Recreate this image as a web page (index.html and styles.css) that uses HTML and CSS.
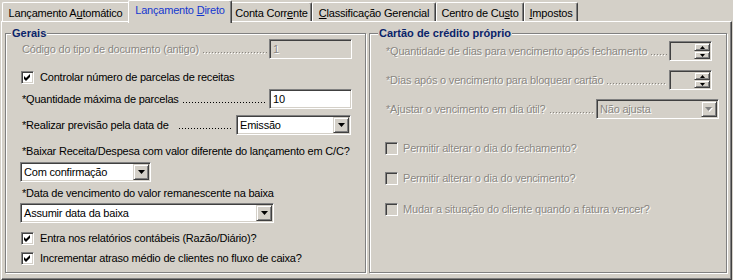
FILE: index.html
```html
<!DOCTYPE html>
<html lang="pt">
<head>
<meta charset="utf-8">
<title>Lançamento Direto</title>
<link rel="stylesheet" href="styles.css">
</head>
<body>
<div class="window">
  <div class="tabs">
    <div class="tab t1 before-active"><span>Lançamento A<u>u</u>tomático</span></div>
    <div class="tab t2 active"><span>Lançamento <u>D</u>ireto</span></div>
    <div class="tab t3 after-active"><span>Conta Corr<u>e</u>nte</span></div>
    <div class="tab t4"><span><u>C</u>lassificação Gerencial</span></div>
    <div class="tab t5"><span>Centro de Cu<u>s</u>to</span></div>
    <div class="tab t6"><span><u>I</u>mpostos</span></div>
  </div>
  <div class="panel">
    <div class="group group-left">
      <div class="group-title">Gerais</div>
      <div class="group-body body-left">
        <div class="row row-code">
          <span class="lbl disabled">Código do tipo de documento (antigo)</span>
          <span class="leader leader-disabled"></span>
          <span class="edit edit-disabled w-edit"><span class="edit-text">1</span></span>
        </div>
        <div class="check-row m-chk1">
          <span class="chk"><svg width="9" height="9" viewBox="0 0 9 9"><polygon points="1,3 3,5 7,1 7,4 3,8 1,6" fill="#000"/></svg></span>
          <span class="chk-lbl">Controlar número de parcelas de receitas</span>
        </div>
        <div class="row row-code m-qtd">
          <span class="lbl">*Quantidade máxima de parcelas</span>
          <span class="leader"></span>
          <span class="edit w-edit"><span class="edit-text">10</span></span>
        </div>
        <div class="row row-prev m-prev">
          <span class="lbl">*Realizar previsão pela data de</span>
          <span class="leader leader-wide"></span>
          <span class="combo w-emissao">
            <span class="combo-text">Emissão</span>
            <span class="combo-btn"><svg width="7" height="4" viewBox="0 0 7 4"><polygon points="0,0 7,0 3.5,4" fill="#000"/></svg></span>
          </span>
        </div>
        <div class="text-row m-baixar">*Baixar Receita/Despesa com valor diferente do lançamento em C/C?</div>
        <span class="combo w-conf m-conf">
          <span class="combo-text">Com confirmação</span>
          <span class="combo-btn"><svg width="7" height="4" viewBox="0 0 7 4"><polygon points="0,0 7,0 3.5,4" fill="#000"/></svg></span>
        </span>
        <div class="text-row m-data">*Data de vencimento do valor remanescente na baixa</div>
        <span class="combo w-assumir m-assumir">
          <span class="combo-text">Assumir data da baixa</span>
          <span class="combo-btn"><svg width="7" height="4" viewBox="0 0 7 4"><polygon points="0,0 7,0 3.5,4" fill="#000"/></svg></span>
        </span>
        <div class="check-row m-chk2">
          <span class="chk"><svg width="9" height="9" viewBox="0 0 9 9"><polygon points="1,3 3,5 7,1 7,4 3,8 1,6" fill="#000"/></svg></span>
          <span class="chk-lbl">Entra nos relatórios contábeis (Razão/Diário)?</span>
        </div>
        <div class="check-row m-chk3">
          <span class="chk"><svg width="9" height="9" viewBox="0 0 9 9"><polygon points="1,3 3,5 7,1 7,4 3,8 1,6" fill="#000"/></svg></span>
          <span class="chk-lbl">Incrementar atraso médio de clientes no fluxo de caixa?</span>
        </div>
      </div>
    </div>
    <div class="group group-right">
      <div class="group-title title-right">Cartão de crédito próprio</div>
      <div class="group-body body-right">
        <div class="row row-spin">
          <span class="lbl disabled">*Quantidade de dias para vencimento após fechamento</span>
          <span class="leader leader-disabled"></span>
          <span class="spin">
            <span class="spin-btns">
              <span class="spin-btn"><svg width="5" height="3" viewBox="0 0 5 3"><polygon points="2.5,0 5,3 0,3" fill="#000"/></svg></span>
              <span class="spin-btn"><svg width="5" height="3" viewBox="0 0 5 3"><polygon points="0,0 5,0 2.5,3" fill="#000"/></svg></span>
            </span>
          </span>
        </div>
        <div class="row row-spin m-spin2">
          <span class="lbl disabled">*Dias após o vencimento para bloquear cartão</span>
          <span class="leader leader-disabled"></span>
          <span class="spin">
            <span class="spin-btns">
              <span class="spin-btn"><svg width="5" height="3" viewBox="0 0 5 3"><polygon points="2.5,0 5,3 0,3" fill="#000"/></svg></span>
              <span class="spin-btn"><svg width="5" height="3" viewBox="0 0 5 3"><polygon points="0,0 5,0 2.5,3" fill="#000"/></svg></span>
            </span>
          </span>
        </div>
        <div class="row row-ajusta m-ajusta">
          <span class="lbl disabled">*Ajustar o vencimento em dia útil?</span>
          <span class="leader leader-disabled"></span>
          <span class="combo combo-disabled w-ajusta">
            <span class="combo-text disabled">Não ajusta</span>
            <span class="combo-btn"><svg width="8" height="5" viewBox="0 0 8 5"><polygon points="1,1 8,1 4.5,5" fill="#fff"/><polygon points="0,0 7,0 3.5,4" fill="#808080"/></svg></span>
          </span>
        </div>
        <div class="check-row m-rchk1">
          <span class="chk chk-disabled"></span>
          <span class="chk-lbl disabled">Permitir alterar o dia do fechamento?</span>
        </div>
        <div class="check-row m-rchk2">
          <span class="chk chk-disabled"></span>
          <span class="chk-lbl disabled">Permitir alterar o dia do vencimento?</span>
        </div>
        <div class="check-row m-rchk3">
          <span class="chk chk-disabled"></span>
          <span class="chk-lbl disabled">Mudar a situação do cliente quando a fatura vencer?</span>
        </div>
      </div>
    </div>
  </div>
</div>
</body>
</html>
```

FILE: styles.css
```css
html, body {
  margin: 0;
  padding: 0;
  background: #d4d0c8;
}

body {
  width: 733px;
  height: 280px;
  overflow: hidden;
  font-family: "Liberation Sans", Arial, sans-serif;
  font-size: 11px;
  letter-spacing: -0.2px;
  color: #000;
}

u {
  text-decoration: underline;
  text-underline-offset: 1px;
}

/* ---------- tabs ---------- */
.tabs {
  display: flex;
  align-items: flex-end;
  height: 21px;
  padding-left: 2px;
  position: relative;
  z-index: 2;
}

.tab {
  box-sizing: border-box;
  height: 19px;
  display: flex;
  align-items: center;
  justify-content: center;
  padding-top: 2px;
  line-height: 13px;
  white-space: nowrap;
  border-top: 1px solid #fff;
  border-left: 1px solid #fff;
  border-right: 1px solid #404040;
  box-shadow: inset -1px 0 0 #808080;
  border-radius: 2px 2px 0 0;
  background: #d4d0c8;
}

.t1 { width: 126px; }
.t2 { width: 104px; }
.t3 { width: 80px; }
.t4 { width: 124px; }
.t5 { width: 88px; }
.t6 { width: 54px; }

.before-active {
  border-right: none;
  box-shadow: none;
  border-top-right-radius: 0;
}

.after-active {
  border-left: none;
  border-top-left-radius: 0;
}

.active {
  height: 23px;
  margin-bottom: -2px;
  padding-top: 0;
  padding-bottom: 4px;
  color: #1438d0;
}

/* ---------- panel ---------- */
.panel {
  box-sizing: border-box;
  height: 259px;
  margin: 0 1px;
  padding: 11px 0 0 3px;
  display: flex;
  gap: 3px;
  border-top: 1px solid #fff;
  border-left: 1px solid #fff;
  border-right: 1px solid #404040;
  border-bottom: 1px solid #404040;
  box-shadow: inset -1px -1px 0 #808080;
}

/* ---------- group boxes ---------- */
.group {
  box-sizing: border-box;
  height: 240px;
  display: flex;
  flex-direction: column;
  border: 1px solid #808080;
  box-shadow: inset 1px 1px 0 #fff, 1px 1px 0 #fff;
}

.group-left { width: 361px; }
.group-right { width: 358px; }

.group-title {
  align-self: flex-start;
  margin: -7px 0 -6px 5px;
  padding: 0 1px;
  line-height: 13px;
  font-weight: bold;
  letter-spacing: 0;
  color: #0a246a;
  background: #d4d0c8;
}

.title-right {
  margin-left: 8px;
}

.group-body {
  display: flex;
  flex-direction: column;
  align-items: flex-start;
}

.body-left {
  padding: 5px 0 0 14px;
}

.body-right {
  padding: 7px 0 0 15px;
}

/* ---------- rows ---------- */
.row {
  display: flex;
  align-items: center;
  height: 20px;
}

.row-code { width: 332px; }
.row-prev { width: 331px; }
.row-spin { width: 327px; }
.row-ajusta { width: 334px; }

.lbl {
  flex: none;
  white-space: nowrap;
  line-height: 13px;
  padding-left: 2px;
}

.body-right .lbl {
  padding-left: 1px;
}

/* dotted leader between a label and its field */
.leader {
  flex: 1;
  align-self: stretch;
  margin: 0 2px 0 4px;
  background-image: linear-gradient(to right, #000 1px, transparent 1px);
  background-size: 3px 1px;
  background-repeat: repeat-x;
  background-position: 0 13px;
}

.leader-wide {
  margin-left: 10px;
  margin-right: 4px;
}

.leader-disabled {
  background-image:
    linear-gradient(to right, #8a8782 1px, transparent 1px),
    linear-gradient(to right, #fff 1px, transparent 1px);
  background-size: 3px 1px, 3px 1px;
  background-position: 0 13px, 1px 14px;
}

.text-row {
  line-height: 13px;
  padding-left: 2px;
  white-space: nowrap;
}

.disabled {
  color: #8a8782;
  text-shadow: 1px 1px 0 #fff;
}

/* ---------- edit ---------- */
.edit {
  box-sizing: border-box;
  height: 20px;
  display: flex;
  align-items: center;
  border: 1px solid;
  border-color: #808080 #fff #fff #808080;
  box-shadow: inset 1px 1px 0 #404040, inset -1px -1px 0 #d4d0c8;
  background: #fff;
  padding-left: 3px;
  line-height: 13px;
}

.edit-disabled {
  background: #d4d0c8;
}

.edit-disabled .edit-text {
  color: #8a8782;
  text-shadow: 1px 1px 0 #fff;
}

.w-edit { width: 83px; flex: none; }

/* ---------- combo ---------- */
.combo {
  box-sizing: border-box;
  height: 20px;
  flex: none;
  display: flex;
  align-items: center;
  padding: 1px;
  border: 1px solid;
  border-color: #808080 #fff #fff #808080;
  box-shadow: inset 1px 1px 0 #404040, inset -1px -1px 0 #d4d0c8;
  background: #fff;
  line-height: 13px;
}

.combo-disabled {
  background: #d4d0c8;
}

.combo-text {
  flex: 1;
  padding-left: 2px;
  white-space: nowrap;
}

.combo-btn {
  box-sizing: border-box;
  width: 16px;
  height: 16px;
  flex: none;
  display: flex;
  align-items: center;
  justify-content: center;
  background: #d4d0c8;
  border: 1px solid;
  border-color: #d4d0c8 #404040 #404040 #d4d0c8;
  box-shadow: inset 1px 1px 0 #fff, inset -1px -1px 0 #808080;
}

.combo-btn svg {
  display: block;
}

.w-emissao { width: 115px; }
.w-conf { width: 131px; }
.w-assumir { width: 254px; }
.w-ajusta { width: 123px; }

/* ---------- spinner ---------- */
.spin {
  box-sizing: border-box;
  width: 43px;
  height: 20px;
  flex: none;
  display: flex;
  justify-content: flex-end;
  padding: 1px;
  border: 1px solid;
  border-color: #808080 #fff #fff #808080;
  box-shadow: inset 1px 1px 0 #404040, inset -1px -1px 0 #d4d0c8;
  background: #d4d0c8;
}

.spin-btns {
  display: flex;
  flex-direction: column;
  width: 16px;
}

.spin-btn {
  box-sizing: border-box;
  height: 8px;
  display: flex;
  align-items: center;
  justify-content: center;
  border: 1px solid;
  border-color: #d4d0c8 #404040 #404040 #d4d0c8;
  box-shadow: inset 1px 1px 0 #fff, inset -1px -1px 0 #808080;
}

.spin-btn svg {
  display: block;
}

/* ---------- checkboxes ---------- */
.check-row {
  display: flex;
  align-items: center;
  height: 14px;
  line-height: 13px;
  white-space: nowrap;
}

.body-left .check-row {
  margin-left: 1px;
}

.chk {
  box-sizing: border-box;
  width: 13px;
  height: 13px;
  flex: none;
  display: flex;
  align-items: center;
  justify-content: center;
  border: 1px solid;
  border-color: #808080 #fff #fff #808080;
  box-shadow: inset 1px 1px 0 #404040, inset -1px -1px 0 #d4d0c8;
  background: #fff;
}

.chk svg {
  display: block;
}

.chk-disabled {
  background: #d4d0c8;
}

.chk-lbl {
  margin-left: 6px;
}

.body-right .chk-lbl {
  margin-left: 5px;
}

/* ---------- vertical rhythm ---------- */
.m-chk1 { margin-top: 11px; }
.m-qtd { margin-top: 5px; }
.m-prev { margin-top: 6px; }
.m-baixar { margin-top: 10px; }
.m-conf { margin-top: 4px; }
.m-data { margin-top: 5px; }
.m-assumir { margin-top: 3px; }
.m-chk2 { margin-top: 8px; }
.m-chk3 { margin-top: 6px; }

.m-spin2 { margin-top: 9px; }
.m-ajusta { margin-top: 9px; }
.m-rchk1 { margin-top: 22px; }
.m-rchk2 { margin-top: 16px; }
.m-rchk3 { margin-top: 17px; }
```
